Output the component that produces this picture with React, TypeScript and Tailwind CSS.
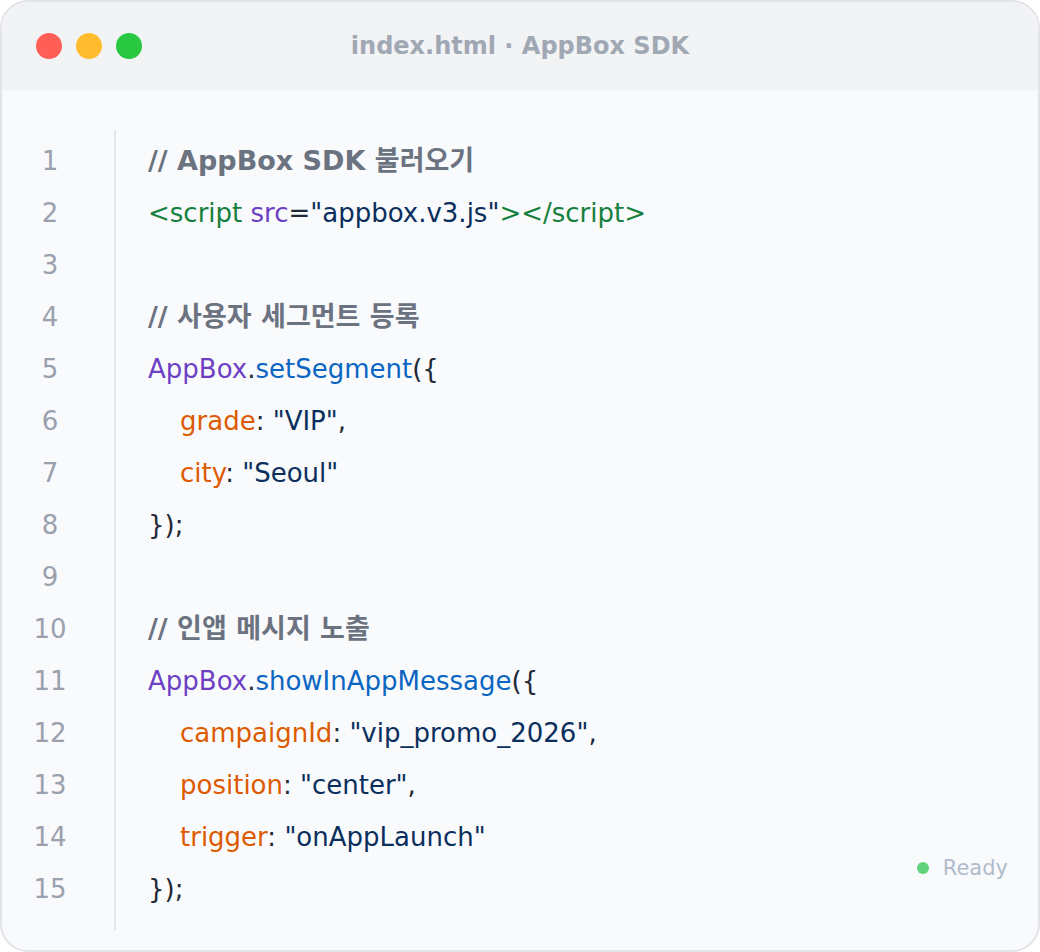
import React from "react";

type Tok = [string, string];
const C = {
  cm: "text-[#6b7280] font-semibold [font-family:'Noto_Sans_CJK_KR',sans-serif] text-[27px]",
  tag: "text-[#15803d]",
  attr: "text-[#6d3fc4]",
  str: "text-[#0b2f5c]",
  pun: "text-[#1f2937]",
  obj: "text-[#6d3fc4]",
  fn: "text-[#0a66c2]",
  key: "text-[#dd5b00]",
};
const lines: { t: Tok[]; i?: boolean }[] = [
  { t: [["// AppBox SDK 불러오기", C.cm]] },
  { t: [["<script ", C.tag], ["src", C.attr], ["=", C.pun], ['"appbox.v3.js"', C.str], ["></script>", C.tag]] },
  { t: [] },
  { t: [["// 사용자 세그먼트 등록", C.cm]] },
  { t: [["AppBox", C.obj], [".", C.pun], ["setSegment", C.fn], ["({", C.pun]] },
  { i: true, t: [["grade", C.key], [": ", C.pun], ['"VIP"', C.str], [",", C.pun]] },
  { i: true, t: [["city", C.key], [": ", C.pun], ['"Seoul"', C.str]] },
  { t: [["});", C.pun]] },
  { t: [] },
  { t: [["// 인앱 메시지 노출", C.cm]] },
  { t: [["AppBox", C.obj], [".", C.pun], ["showInAppMessage", C.fn], ["({", C.pun]] },
  { i: true, t: [["campaignId", C.key], [": ", C.pun], ['"vip_promo_2026"', C.str], [",", C.pun]] },
  { i: true, t: [["position", C.key], [": ", C.pun], ['"center"', C.str], [",", C.pun]] },
  { i: true, t: [["trigger", C.key], [": ", C.pun], ['"onAppLaunch"', C.str]] },
  { t: [["});", C.pun]] },
];

export default function App() {
  return (
    <div className="w-[1040px] h-[952px] relative overflow-hidden rounded-[28px] border-2 border-[#e2e4e8] bg-[#f9fafc]" style={{ fontFamily: '"DejaVu Sans", "Noto Sans CJK KR", sans-serif' }}>
      <div className="h-[88px] bg-[#f2f3f5] flex items-center relative px-[34px]">
        <div className="flex gap-[14px]">
          <span className="w-[26px] h-[26px] rounded-full bg-[#ff5f57]" />
          <span className="w-[26px] h-[26px] rounded-full bg-[#febc2e]" />
          <span className="w-[26px] h-[26px] rounded-full bg-[#28c840]" />
        </div>
        <div className="absolute inset-0 flex items-center justify-center text-[24px] font-semibold text-[#a0a8b4] [font-family:'Noto_Sans_CJK_KR',sans-serif]">index.html · AppBox SDK</div>
      </div>
      <div className="pt-[40px] flex">
        <div className="w-[114px] pr-[16px] pt-[5px] pb-[15px] text-center text-[26px] text-[#9aa1ad] border-r-2 border-[#e5e7eb]">
          {lines.map((_, i) => (
            <div key={i} className="h-[52px] leading-[52px]">{i + 1}</div>
          ))}
        </div>
        <div className="pl-[32px] pt-[5px] text-[26px]">
          {lines.map((l, i) => (
            <div key={i} className={`h-[52px] leading-[52px] whitespace-pre ${l.i ? "pl-[32px]" : ""}`}>
              {l.t.map(([s, c], j) => (
                <span key={j} className={c}>{s}</span>
              ))}
            </div>
          ))}
        </div>
      </div>
      <div className="absolute right-[30px] bottom-[66px] flex items-center gap-[14px] text-[21px] text-[#b0bccb]">
        <span className="w-[12px] h-[12px] rounded-full bg-[#5fd47a]" />
        Ready
      </div>
    </div>
  );
}
